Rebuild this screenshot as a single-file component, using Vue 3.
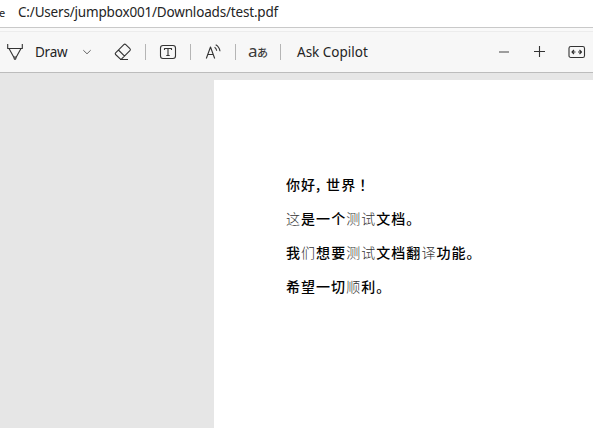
<script setup>
const lines = [
  [{ t: '你好' }, { t: ',', k: 'comma' }, { t: '世界' }, { t: '！', k: 'bang' }],
  [{ t: '这', k: 'thin' }, { t: '是一个' }, { t: '测试', k: 'thin' }, { t: '文档。' }],
  [{ t: '我' }, { t: '们', k: 'thin' }, { t: '想要' }, { t: '测试', k: 'thin' }, { t: '文档翻' }, { t: '译', k: 'thin' }, { t: '功能。' }],
  [{ t: '希望一切' }, { t: '顺', k: 'thin' }, { t: '利。' }],
]
</script>

<template>
  <div class="viewer">
    <header class="address"><span class="scheme">e</span><span class="path">C:/Users/jumpbox001/Downloads/test.pdf</span></header>
    <div class="seam"></div>
    <nav class="toolbar">
      <svg class="pen" width="18" height="18" viewBox="0 0 18 18"><path d="M1.7 1v4.5h14.6V1M3 5.5l4.7 8.5h2.6L15 5.5M7.7 14l.8 2.2h1l.8-2.2" /></svg>
      <span class="draw">Draw</span>
      <svg class="chevron" width="10" height="8" viewBox="0 0 10 8"><path d="M1.3 2.2 5 5.8l3.7-3.6" /></svg>
      <svg class="eraser" width="18" height="18" viewBox="0 0 18 18"><path d="M1.6 9.8 9.8 1.6q1-1 2 0l4.1 4.1q1 1 0 2l-8 8q-1 .9-2 0l-4.3-4.2q-.8-.8 0-1.7M4.4 7l6.2 6.1M6 16.5h8" /></svg>
      <i class="sep s1"></i>
      <svg class="textbox" width="18" height="18" viewBox="0 0 18 18"><rect x="1.5" y="2.5" width="15" height="13" rx="2.5" /><path d="M5.5 7V5.5h7V7M9 5.5v7M7.3 12.5h3.4" /></svg>
      <i class="sep s2"></i>
      <svg class="aloud" width="18" height="18" viewBox="0 0 18 18"><path d="M1.3 15.5 5.5 4l4.2 11.5M2.9 11.5h5.3M9.6 4.3q1.8 1.2 2.1 3.5M10.7 1.7q3.8 2.1 4.3 6.6" /></svg>
      <i class="sep s3"></i>
      <span class="translate"><span class="latin">a</span><span class="kana">あ</span></span>
      <i class="sep s4"></i>
      <span class="copilot">Ask Copilot</span>
      <svg class="minus" width="12" height="14" viewBox="0 0 12 14"><path d="M1 7h10" /></svg>
      <svg class="plus" width="13" height="14" viewBox="0 0 13 14"><path d="M1 6.5h11M6.5 1v11" /></svg>
      <svg class="fit" width="18" height="14" viewBox="0 0 18 14"><rect x="1" y="1.5" width="15.5" height="11" rx="1.8" /><path d="M7.5 7H4m2-2L4 7l2 2M10 7h3.5m-2-2 2 2-2 2" /></svg>
    </nav>
    <main class="canvas">
      <article class="page">
        <p v-for="(line, i) in lines" :key="i"><span v-for="(run, j) in line" :key="j" :class="run.k">{{ run.t }}</span></p>
      </article>
    </main>
  </div>
</template>

<style>
body { margin: 0; overflow: hidden; }
</style>

<style scoped>
.viewer { width: 593px; height: 428px; display: flex; flex-direction: column; overflow: hidden; background: #e6e6e6; font-family: "Noto Sans", "Open Sans", sans-serif; color: #242424; }
.address { height: 27px; flex: none; display: flex; align-items: center; background: #fff; font-size: 13.5px; line-height: 25px; white-space: nowrap; box-sizing: border-box; padding-bottom: 2px; }
.scheme { width: 18px; text-indent: -1px; font-size: 11px; flex: none; }
.path { letter-spacing: -0.18px; }
.seam { height: 4px; flex: none; background: #f9f9f9; border-top: 1px solid #c9c9c9; box-sizing: border-box; }
.toolbar { height: 42px; flex: none; box-sizing: border-box; display: flex; align-items: center; background: #f7f7f7; border-top: 1px solid #ececec; border-bottom: 1px solid #bcbcbc; padding-left: 6px; font-size: 13.5px; white-space: nowrap; }
svg { fill: none; stroke: #333; stroke-width: 1.1; flex: none; stroke-linejoin: round; }
.draw { width: 46px; margin-left: 11px; letter-spacing: -0.25px; }
.chevron { margin-left: 1px; stroke: #666; stroke-width: 1; }
.eraser { margin-left: 22px; }
.sep { width: 1px; height: 16px; background: #b5b5b5; flex: none; }
.s1 { margin-left: 13px; }
.textbox { margin-left: 13px; }
.s2 { margin-left: 13px; }
.aloud { margin-left: 14px; }
.s3 { margin-left: 12px; }
.translate { width: 32px; margin-left: 12px; display: flex; align-items: center; line-height: 18px; color: #3a3a3a; opacity: 0.99; }
.latin { font-size: 17px; width: 9px; margin-top: -3px; }
.kana { font: 500 11px/18px "Noto Sans CJK JP", sans-serif; }
.s4 { margin-left: 0; }
.copilot { margin-left: 16px; width: 201px; }
.minus { stroke: #555; }
.plus { margin-left: 23px; }
.fit { margin-left: 22px; }
.canvas { flex: 1; min-height: 0; padding: 7px 0 0 214px; background: #e6e6e6; }
.page { height: 100%; box-sizing: border-box; background: #fff; padding: 87px 0 0 72px; color: #000; font: 500 14px/34px "Noto Sans CJK SC", sans-serif; letter-spacing: 1.04px; }
p { margin: 0; height: 34px; white-space: nowrap; opacity: 0.99; }
.thin { font-weight: 300; color: #333; }
.comma { display: inline-block; width: 10px; }
.bang { padding-left: 3px; }
</style>
